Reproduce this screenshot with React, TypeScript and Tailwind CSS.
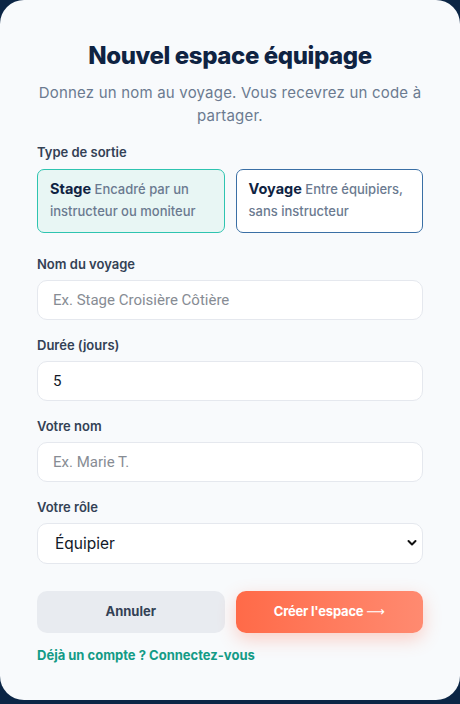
import React from "react";

export default function App() {
  return (
    <div className="min-h-[704px] w-full bg-[#0b2545] pb-[4px]" style={{ fontFamily: "Inter, 'Noto Sans', sans-serif" }}>
      <div className="flex min-h-[700px] flex-col rounded-[24px] bg-[#f8fafc] px-[37px] pt-[40px] pb-[30px]">
        <h1 className="text-center text-[24px] font-extrabold leading-[32px] tracking-[-0.4px] text-[#0f2342]">
          Nouvel espace équipage
        </h1>
        <p className="mt-[9px] text-center text-[15px] leading-[23px] tracking-[0.2px] text-[#6b7a90]">
          Donnez un nom au voyage. Vous recevrez un code à partager.
        </p>

        <div className="mt-[16px] text-[13px] font-semibold leading-[18px] text-[#334155]">Type de sortie</div>
        <div className="mt-[8px] grid grid-cols-2 gap-[11px]">
          <div className="rounded-[7px] border border-[#2ec4b0] bg-[#e8f6f4] px-[12px] pt-[8px] pb-[10px] text-left">
            <p className="text-[13px] font-medium leading-[22px] text-[#6b7a90]">
              <b className="text-[14.5px] font-bold text-[#0f2342]">Stage</b> Encadré par un instructeur ou moniteur
            </p>
          </div>
          <div className="rounded-[7px] border border-[#3a6fa5] bg-white px-[12px] pt-[8px] pb-[10px] text-left">
            <p className="text-[13px] font-medium leading-[22px] text-[#6b7a90]">
              <b className="text-[14.5px] font-bold text-[#0f2342]">Voyage</b> Entre équipiers, sans instructeur
            </p>
          </div>
        </div>

        <label className="mt-[22px] text-[13px] font-semibold leading-[18px] text-[#334155]">Nom du voyage</label>
        <input
          className="mt-[7px] h-[40px] rounded-[10px] border border-[#e5e8ee] bg-white px-[15px] text-[15px] text-[#0f2342] outline-none placeholder:text-[#878c94]"
          placeholder="Ex. Stage Croisière Côtière"
          style={{ fontFamily: "Roboto, sans-serif" }}
        />

        <label className="mt-[16px] text-[13px] font-semibold leading-[18px] text-[#334155]">Durée (jours)</label>
        <input
          className="mt-[7px] h-[40px] rounded-[10px] border border-[#e5e8ee] bg-white px-[15px] text-[15px] text-[#111827] outline-none"
          defaultValue="5"
          style={{ fontFamily: "Roboto, sans-serif" }}
        />

        <label className="mt-[16px] text-[13px] font-semibold leading-[18px] text-[#334155]">Votre nom</label>
        <input
          className="mt-[7px] h-[40px] rounded-[10px] border border-[#e5e8ee] bg-white px-[15px] text-[15px] text-[#0f2342] outline-none placeholder:text-[#878c94]"
          placeholder="Ex. Marie T."
          style={{ fontFamily: "Roboto, sans-serif" }}
        />

        <label className="mt-[16px] text-[13px] font-semibold leading-[18px] text-[#334155]">Votre rôle</label>
        <div className="relative mt-[7px]">
          <select className="h-[41px] w-full appearance-none rounded-[10px] border border-[#e5e8ee] bg-white pl-[17px] text-[15.5px] text-[#111827] outline-none">
            <option>Équipier</option>
            <option>Skipper</option>
          </select>
          <svg
            className="pointer-events-none absolute right-[6px] top-[16px]"
            width="10"
            height="8"
            viewBox="0 0 10 8"
            fill="none"
          >
            <path d="M1.5 2 L5 5.5 L8.5 2" stroke="#111" strokeWidth="2" strokeLinecap="round" strokeLinejoin="round" />
          </svg>
        </div>

        <div className="mt-[27px] grid grid-cols-2 gap-[11px]">
          <button className="h-[42px] rounded-[10px] bg-[#e8ebf0] text-[13px] font-bold text-[#334155]">Annuler</button>
          <button className="h-[42px] rounded-[10px] bg-gradient-to-r from-[#ff6a48] to-[#ff8a70] text-[13px] font-bold tracking-[-0.2px] text-white shadow-[0_6px_18px_rgba(255,106,72,0.3)]">
            Créer l'espace <span style={{ fontFamily: "'DejaVu Sans', sans-serif" }} className="font-normal">⟶</span>
          </button>
        </div>

        <a className="mt-[13px] text-[13px] font-bold leading-[18px] text-[#139b86]">Déjà un compte ? Connectez-vous</a>
      </div>
    </div>
  );
}
